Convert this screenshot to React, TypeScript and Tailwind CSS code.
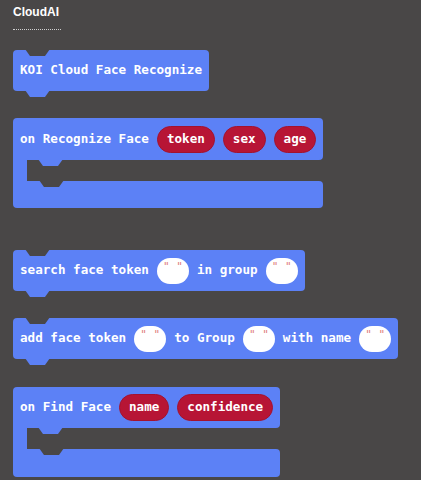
import React from "react";

const mono = { fontFamily: '"DejaVu Sans Mono", "Liberation Mono", monospace' };

function Notch() {
  return (
    <svg className="absolute top-0 left-[12px]" width="25" height="6" viewBox="0 0 25 6">
      <polygon points="0,-1 5,6 20,6 25,-1" fill="#494747" />
    </svg>
  );
}

function Tab({ left = "left-[12px]" }: { left?: string }) {
  return (
    <svg className={`absolute top-full ${left}`} width="25" height="6" viewBox="0 0 25 6">
      <polygon points="0,-1 5,6 20,6 25,-1" fill="#5c81f6" />
    </svg>
  );
}

function Label({ children }: { children: React.ReactNode }) {
  return <span className="text-white font-bold text-[12.6px] whitespace-pre leading-none">{children}</span>;
}

function Pill({ children }: { children: React.ReactNode }) {
  return (
    <span className="h-[27px] px-[9px] rounded-full bg-[#b71535] border border-[#a3122f] flex items-center text-white font-bold text-[12.6px] leading-none">
      {children}
    </span>
  );
}

function Oval() {
  return (
    <span className="h-[26px] w-[32px] rounded-full bg-white flex justify-center items-start pt-[3px] text-[11px] leading-none text-[#e07c7c] whitespace-pre">
      {'" "'}
    </span>
  );
}

function StackBlock({ children }: { children: React.ReactNode }) {
  return (
    <div className="relative self-start flex items-center h-[41px] px-[7px] gap-2 rounded-[4px] bg-[#5c81f6]">
      <Notch />
      {children}
      <Tab />
    </div>
  );
}

function CBlock({ children, top, bottom }: { children: React.ReactNode; top: string; bottom: string }) {
  return (
    <div className="self-start flex flex-col">
      <div className={`relative flex items-center ${top} px-[7px] gap-2 bg-[#5c81f6] rounded-t-[4px] rounded-br-[4px]`}>
        {children}
        <Tab left="left-[25px]" />
      </div>
      <div className="flex h-[21px]">
        <div className="w-[14px] bg-[#5c81f6]" />
      </div>
      <div className={`relative ${bottom} bg-[#5c81f6] rounded-b-[4px] rounded-tr-[4px]`}>
        <svg className="absolute top-0 left-[26px]" width="25" height="6" viewBox="0 0 25 6">
          <polygon points="0,-1 5,6 20,6 25,-1" fill="#494747" />
        </svg>
      </div>
    </div>
  );
}

export default function App() {
  return (
    <div className="min-h-screen w-full bg-[#494747] pl-[13px] pt-[4px] flex flex-col" style={mono}>
      <div
        className="h-[16px] text-[12px] font-bold text-white leading-[16px]"
        style={{ fontFamily: '"Liberation Sans", Arial, sans-serif' }}
      >
        CloudAI
      </div>
      <div className="mt-[9px] w-[48px] h-0 border-t border-dotted border-[#cfcfcf]" />

      <div className="mt-[20px] flex flex-col">
        <StackBlock>
          <Label>KOI Cloud Face Recognize</Label>
        </StackBlock>

        <div className="mt-[27px] flex flex-col">
          <CBlock top="h-[42px]" bottom="h-[27px]">
            <Label>on Recognize Face</Label>
            <Pill>token</Pill>
            <Pill>sex</Pill>
            <Pill>age</Pill>
          </CBlock>
        </div>

        <div className="mt-[42px] flex flex-col">
          <StackBlock>
            <Label>search face token</Label>
            <Oval />
            <Label>in group</Label>
            <Oval />
          </StackBlock>
        </div>

        <div className="mt-[27px] flex flex-col">
          <StackBlock>
            <Label>add face token</Label>
            <Oval />
            <Label>to Group</Label>
            <Oval />
            <Label>with name</Label>
            <Oval />
          </StackBlock>
        </div>

        <div className="mt-[28px] flex flex-col">
          <CBlock top="h-[41px]" bottom="h-[28px]">
            <Label>on Find Face</Label>
            <Pill>name</Pill>
            <Pill>confidence</Pill>
          </CBlock>
        </div>
      </div>
    </div>
  );
}
